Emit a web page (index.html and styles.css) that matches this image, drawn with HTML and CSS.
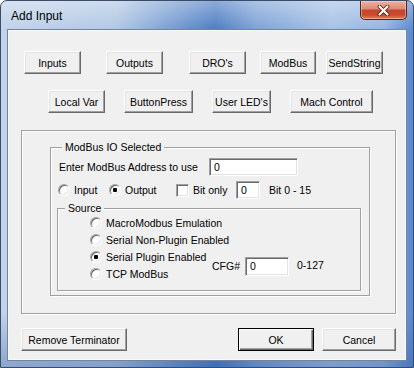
FILE: index.html
```html
<!DOCTYPE html>
<html lang="en">

<head>
    <meta charset="UTF-8">
    <meta name="viewport" content="width=device-width, initial-scale=1.0">
    <title>Add Input</title>
    <link rel="stylesheet" href="styles.css">
</head>

<body>
    <div class="window">
        <div class="titlebar">
            <span class="title">Add Input</span>
            <button class="close-btn" title="Close">
                <svg width="13" height="11" viewBox="0 0 13 11">
                    <path d="M2.5 1.5 L10.5 9.5 M10.5 1.5 L2.5 9.5" stroke="#4a1a10" stroke-width="3.8" stroke-linecap="round" fill="none"/>
                    <path d="M2.5 1.5 L10.5 9.5 M10.5 1.5 L2.5 9.5" stroke="#ffffff" stroke-width="2.2" stroke-linecap="round" fill="none"/>
                </svg>
            </button>
        </div>

        <div class="client">
            <div class="btn-row row-top">
                <button class="btn">Inputs</button>
                <button class="btn">Outputs</button>
                <button class="btn">DRO's</button>
                <button class="btn">ModBus</button>
                <button class="btn">SendString</button>
            </div>
            <div class="btn-row row-second">
                <button class="btn">Local Var</button>
                <button class="btn">ButtonPress</button>
                <button class="btn">User LED's</button>
                <button class="btn">Mach Control</button>
            </div>

            <div class="panel">
                <div class="group group-modbus">
                    <div class="group-title">ModBus IO Selected</div>
                    <div class="field-row addr-row">
                        <span class="addr-label">Enter ModBus Address to use</span>
                        <span class="textbox addr-box">0</span>
                    </div>
                    <div class="field-row io-row">
                        <span class="opt opt-input"><span class="radio"></span>Input</span>
                        <span class="opt opt-output"><span class="radio checked"></span>Output</span>
                        <span class="opt opt-bit"><span class="checkbox"></span>Bit only</span>
                        <span class="textbox bit-box">0</span>
                        <span class="hint bit-hint">Bit 0 - 15</span>
                    </div>

                    <div class="group group-source">
                        <div class="group-title">Source</div>
                        <div class="source-grid">
                            <span class="opt src-opt"><span class="radio"></span>MacroModbus Emulation</span>
                            <span class="opt src-opt"><span class="radio"></span>Serial Non-Plugin Enabled</span>
                            <span class="opt src-opt"><span class="radio checked"></span>Serial Plugin Enabled</span>
                            <span class="opt src-opt"><span class="radio"></span>TCP ModBus</span>
                            <div class="cfg">
                                <span class="cfg-label">CFG#</span>
                                <span class="textbox cfg-box">0</span>
                                <span class="hint cfg-hint">0-127</span>
                            </div>
                        </div>
                    </div>
                </div>
            </div>

            <div class="footer">
                <button class="btn btn-remove">Remove Terminator</button>
                <span class="spacer"></span>
                <button class="btn btn-ok">OK</button>
                <button class="btn btn-cancel">Cancel</button>
            </div>
        </div>
    </div>
</body>

</html>
```

FILE: styles.css
```css
* {
    box-sizing: border-box;
}

body {
    margin: 0;
    font-family: "Liberation Sans", Arial, sans-serif;
    font-size: 10.5px;
    color: #000;
    background: #ffffff;
}

/* window frame */
.window {
    width: 414px;
    height: 368px;
    display: flex;
    flex-direction: column;
    padding: 0 7px 7px;
    border: 1px solid #3b4c66;
    border-radius: 7px 7px 0 0;
    background:
        linear-gradient(180deg, rgba(255, 255, 255, 0.35) 0, rgba(255, 255, 255, 0) 28px),
        linear-gradient(180deg, rgba(0, 0, 0, 0) 85%, rgba(40, 80, 150, 0.35) 100%),
        linear-gradient(90deg, #c2d3ea 0%, #b2c8e5 28%, #6f96cf 44%, #4f7ec4 52%, #7fa3d7 62%, #a8c2e6 80%, #98b6e0 93%, #5b89cf 100%);
}

.titlebar {
    height: 29px;
    display: flex;
    align-items: center;
}

.title {
    padding-left: 3px;
    font-size: 12px;
    color: #000;
}

.close-btn {
    align-self: flex-start;
    margin-left: auto;
    margin-right: -1px;
    width: 47px;
    height: 19px;
    padding: 0;
    display: flex;
    align-items: center;
    justify-content: center;
    border: 1px solid #5b2316;
    border-top: none;
    border-radius: 0 0 5px 5px;
    background: linear-gradient(180deg, #eab2a4 0%, #dd8b78 42%, #c5462b 52%, #c94a2e 78%, #e2845d 100%);
    box-shadow: inset 0 0 0 1px rgba(255, 220, 210, 0.45);
}

.client {
    flex: 1;
    background: #f0f0f0;
    border: 1px solid #f7f9fc;
    box-shadow: 0 0 0 1px #72839d;
}

/* classic push buttons */
.btn {
    height: 23px;
    padding: 0;
    font-family: inherit;
    font-size: 10.5px;
    color: #000;
    background: #f0f0f0;
    border: 1px solid;
    border-color: #ffffff #696969 #696969 #ffffff;
    box-shadow: inset -1px -1px 0 #a0a0a0, inset 1px 1px 0 #e3e3e3;
}

.btn-row {
    display: flex;
}

.row-top {
    margin-top: 20px;
    padding-left: 15px;
}

.row-top .btn {
    width: 57px;
}

.row-top .btn:nth-child(2) {
    margin-left: 25px;
}

.row-top .btn:nth-child(3) {
    margin-left: 26px;
}

.row-top .btn:nth-child(4) {
    width: 56px;
    margin-left: 14px;
}

.row-top .btn:nth-child(5) {
    margin-left: 10px;
}

.row-second {
    margin-top: 16px;
    padding-left: 39px;
    gap: 19px;
}

.row-second .btn:nth-child(1) {
    width: 57px;
}

.row-second .btn:nth-child(2) {
    width: 69px;
}

.row-second .btn:nth-child(3) {
    width: 59px;
}

.row-second .btn:nth-child(4) {
    width: 83px;
}

/* framed area */
.panel {
    margin: 17px 0 0 12px;
    width: 375px;
    height: 184px;
    padding: 16px 0 0 28px;
    border: 1px solid #a0a0a0;
    box-shadow: inset 1px 1px 0 #ffffff, 1px 1px 0 #ffffff;
}

.group {
    border: 1px solid #a0a0a0;
    box-shadow: inset 1px 1px 0 #ffffff, 1px 1px 0 #ffffff;
}

.group-title {
    display: table;
    margin: -7px 0 0 4px;
    padding: 0 3px;
    line-height: 13px;
    background: #f0f0f0;
}

.group-modbus {
    width: 320px;
    padding: 0 0 4px 7px;
}

.field-row {
    display: flex;
    align-items: center;
    height: 18px;
    white-space: nowrap;
}

.addr-row {
    margin-top: 4px;
}

.addr-label {
    width: 150px;
    margin-left: 1px;
}

.textbox {
    display: flex;
    align-items: center;
    height: 18px;
    padding-left: 4px;
    background: #ffffff;
    border: 1px solid;
    border-color: #a0a0a0 #ffffff #ffffff #a0a0a0;
    box-shadow: inset 1px 1px 0 #696969, inset -1px -1px 0 #e3e3e3;
}

.addr-box {
    width: 89px;
}

.io-row {
    margin-top: 5px;
}

.opt {
    display: flex;
    align-items: center;
    white-space: nowrap;
}

.opt-input {
    width: 51px;
}

.opt-output {
    width: 67px;
}

.opt-bit {
    width: 60px;
}

.radio {
    position: relative;
    flex: none;
    width: 12px;
    height: 12px;
    margin-right: 4px;
    border-radius: 50%;
    background: #ffffff;
    border: 1px solid;
    border-color: #a0a0a0 #ffffff #ffffff #a0a0a0;
    box-shadow: inset 1px 1px 0 #696969, inset -1px -1px 0 #e3e3e3;
}

.radio.checked::after {
    content: "";
    position: absolute;
    left: 3px;
    top: 3px;
    width: 4px;
    height: 4px;
    border-radius: 1px;
    background: #000;
}

.checkbox {
    flex: none;
    width: 13px;
    height: 13px;
    margin-right: 4px;
    background: #ffffff;
    border: 1px solid;
    border-color: #a0a0a0 #ffffff #ffffff #a0a0a0;
    box-shadow: inset 1px 1px 0 #696969, inset -1px -1px 0 #e3e3e3;
}

.bit-box {
    width: 24px;
}

.bit-hint {
    margin-left: 9px;
}

.group-source {
    width: 304px;
    margin: 9px 0 0 -1px;
    padding: 0 0 8px 32px;
}

.group-source .group-title {
    margin-left: -25px;
}

.source-grid {
    display: grid;
    grid-template-columns: 122px auto;
    grid-template-rows: repeat(4, 17px);
    margin-top: -1px;
}

.src-opt {
    grid-column: 1;
}

.cfg {
    grid-column: 2;
    grid-row: 3 / 5;
    display: flex;
    align-items: center;
    padding-top: 2px;
}

.cfg-label {
    width: 33px;
}

.cfg-box {
    width: 44px;
    height: 19px;
}

.cfg-hint {
    margin-left: 8px;
    margin-top: -2px;
}

/* bottom buttons */
.footer {
    display: flex;
    width: 375px;
    margin: 14px 0 0 12px;
}

.spacer {
    flex: 1;
}

.btn-remove {
    width: 106px;
}

.btn-ok {
    width: 76px;
    border-color: #000;
    box-shadow: inset 1px 1px 0 #ffffff, inset -1px -1px 0 #696969, inset -2px -2px 0 #a0a0a0;
}

.btn-cancel {
    width: 74px;
    margin-left: 8px;
}
```
